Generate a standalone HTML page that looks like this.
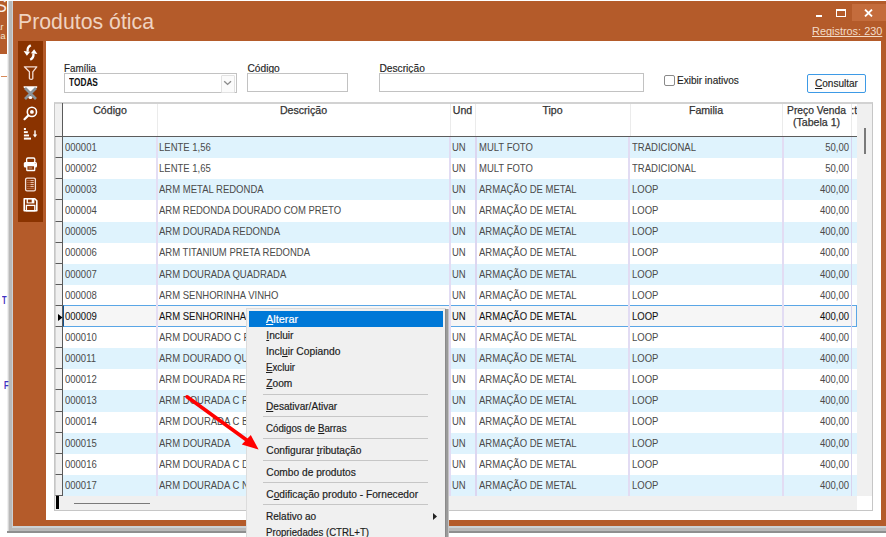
<!DOCTYPE html><html><head><meta charset="utf-8"><style>
*{margin:0;padding:0;box-sizing:border-box}
html,body{width:886px;height:537px;overflow:hidden;background:#fff;font-family:"Liberation Sans",sans-serif}
.a{position:absolute}
.t{position:absolute;white-space:nowrap;line-height:1}
u{text-decoration:underline;text-underline-offset:1px;text-decoration-skip-ink:none}
</style></head><body><div class="a" style="left:0px;top:1px;width:7px;height:53px;background:#b55c2b;"></div>
<div class="t" style="left:-4.8px;top:-1.59px;font-size:17.5px;color:#f8ede6;">S</div>
<div class="t" style="left:-4.5px;top:22.89px;font-size:9px;color:#f2e6d2;">ar</div>
<div class="t" style="left:-4.5px;top:31.89px;font-size:9px;color:#f2e6d2;">na</div>
<div class="a" style="left:1px;top:76px;width:6px;height:1px;background:#d88a5a;"></div>
<div class="a" style="left:6.5px;top:54px;width:1.5px;height:478px;background:#f0f0f0;"></div>
<div class="a" style="left:8px;top:1px;width:880px;height:531px;background:#b9b9b9;"></div>
<div class="a" style="left:8px;top:1px;width:1px;height:531px;background:#d6d6d6;"></div>
<div class="a" style="left:12px;top:1px;width:1px;height:526px;background:#ccd0d4;"></div>
<div class="a" style="left:12px;top:526px;width:880px;height:2px;background:#cdd1d4;"></div>
<div class="a" style="left:7px;top:531px;width:879px;height:2px;background:#8f8f8f;"></div>
<div class="t" style="left:2.2px;top:296.05px;font-size:10px;color:#4030c0;transform:scaleX(0.75);transform-origin:left top;font-weight:bold">T</div>
<div class="t" style="left:3.6px;top:381.05px;font-size:10px;color:#4030c0;transform:scaleX(0.75);transform-origin:left top;font-weight:bold">F</div>
<div class="a" style="left:13px;top:1px;width:880px;height:525px;background:#b45b2a;"></div>
<div class="t" style="left:17.9px;top:11.37px;font-size:22.4px;color:#efd3c1;transform:scaleX(0.95);transform-origin:left top;">Produtos ótica</div>
<div class="a" style="left:852px;top:4px;width:40px;height:17px;background:#c46c3c;"></div>
<div class="a" style="left:816px;top:15px;width:6px;height:2px;background:#fff;"></div>
<div class="a" style="left:836px;top:9px;width:10px;height:8px;border:1.5px solid #fff;border-top-width:2.5px"></div>
<svg class="a" style="left:864px;top:9px" width="9" height="8" viewBox="0 0 9 8"><path d="M1 0.6L8 7.4M8 0.6L1 7.4" stroke="#fff" stroke-width="1.9"/></svg>
<div class="t" style="left:811.5px;top:25.84px;font-size:11.2px;color:#f3dcc8;transform:scaleX(0.975);transform-origin:left top;text-decoration:underline;text-underline-offset:1.2px;text-decoration-skip-ink:none">Registros: 230</div>
<div class="a" style="left:18px;top:41px;width:25px;height:181px;background:#8a3300;"></div>
<div class="a" style="left:46px;top:41px;width:835px;height:479px;background:#fff;"></div>
<div class="t" style="left:64.3px;top:63.78px;font-size:10.2px;color:#1e1e1e;transform:scaleX(0.96);transform-origin:left top;-webkit-text-stroke:0.15px #1e1e1e">Família</div>
<div class="a" style="left:64px;top:73px;width:173px;height:20px;border:1px solid #c2c2c2;background:#fff"></div>
<div class="t" style="left:69.2px;top:78.18px;font-size:10.2px;color:#111;transform:scaleX(0.815);transform-origin:left top;font-weight:bold">TODAS</div>
<div class="a" style="left:221px;top:74.5px;width:14px;height:18px;border:1px solid #e2e2e2;border-radius:1px;background:#fbfbfb"></div>
<svg class="a" style="left:223px;top:80px" width="10" height="6" viewBox="0 0 10 6"><path d="M1.2 1.2L4.6 4.4L8 1.2" stroke="#8c8c8c" fill="none" stroke-width="1.4"/></svg>
<div class="a" style="left:247px;top:60px;width:60px;height:13px;overflow:hidden">
<div class="t" style="left:0.5px;top:3.68px;font-size:10.2px;color:#1e1e1e;-webkit-text-stroke:0.15px #1e1e1e">Código</div>
</div>
<div class="a" style="left:247px;top:73px;width:101px;height:19px;border:1px solid #c2c2c2;background:#fff"></div>
<div class="t" style="left:379.5px;top:63.88px;font-size:10.2px;color:#1e1e1e;-webkit-text-stroke:0.15px #1e1e1e">Descrição</div>
<div class="a" style="left:379px;top:73px;width:265px;height:19px;border:1px solid #c2c2c2;background:#fff"></div>
<div class="a" style="left:664px;top:75px;width:11px;height:11px;border:1px solid #8a8a8a;border-radius:2px;background:#fff"></div>
<div class="t" style="left:677.2px;top:75.91px;font-size:10.4px;color:#1e1e1e;transform:scaleX(0.965);transform-origin:left top;-webkit-text-stroke:0.15px #1e1e1e">Exibir inativos</div>
<div class="a" style="left:807px;top:74px;width:59px;height:19px;border:1px solid #3d9ae6;border-radius:2px;background:#fdfdfd"></div>
<div class="t" style="left:814.5px;top:78.61px;font-size:10.4px;color:#1e1e1e;transform:scaleX(0.965);transform-origin:left top;-webkit-text-stroke:0.15px #1e1e1e"><u>C</u>onsultar</div>
<div class="a" style="left:54px;top:102px;width:819px;height:409px;border:1px solid #c6c6c6;border-top:2px solid #d2d2d2;background:#fff"></div>
<div class="t" style="left:63px;top:104.64px;font-size:10.6px;color:#333;width:94px;text-align:center;-webkit-text-stroke:0.25px #333">Código</div>
<div class="t" style="left:157px;top:104.64px;font-size:10.6px;color:#333;width:293px;text-align:center;-webkit-text-stroke:0.25px #333">Descrição</div>
<div class="t" style="left:450px;top:104.64px;font-size:10.6px;color:#333;width:25px;text-align:center;-webkit-text-stroke:0.25px #333">Und</div>
<div class="t" style="left:475px;top:104.64px;font-size:10.6px;color:#333;width:155px;text-align:center;-webkit-text-stroke:0.25px #333">Tipo</div>
<div class="t" style="left:630px;top:104.64px;font-size:10.6px;color:#333;width:152px;text-align:center;-webkit-text-stroke:0.25px #333">Familia</div>
<div class="t" style="left:782px;top:104.54px;font-size:10.6px;color:#333;width:69px;text-align:center;transform:scaleX(0.97);transform-origin:center top;-webkit-text-stroke:0.25px #333">Preço Venda</div>
<div class="t" style="left:782px;top:116.54px;font-size:10.6px;color:#333;width:69px;text-align:center;-webkit-text-stroke:0.25px #333">(Tabela 1)</div>
<div class="a" style="left:851px;top:103px;width:6px;height:20px;overflow:hidden">
<div class="t" style="left:0.2px;top:1.54px;font-size:10.6px;color:#333;-webkit-text-stroke:0.25px #333">:t</div>
</div>
<div class="a" style="left:157px;top:104px;width:1px;height:32px;background:#ebebeb;"></div>
<div class="a" style="left:450px;top:104px;width:1px;height:32px;background:#ebebeb;"></div>
<div class="a" style="left:475px;top:104px;width:1px;height:32px;background:#ebebeb;"></div>
<div class="a" style="left:630px;top:104px;width:1px;height:32px;background:#ebebeb;"></div>
<div class="a" style="left:782px;top:104px;width:1px;height:32px;background:#ebebeb;"></div>
<div class="a" style="left:851px;top:104px;width:1px;height:32px;background:#ebebeb;"></div>
<div class="a" style="left:55px;top:104px;width:7px;height:32px;background:#f0f0f0;"></div>
<div class="a" style="left:62px;top:103px;width:1.2px;height:393px;background:#5a5a5a;"></div>
<div class="a" style="left:55px;top:136px;width:802px;height:1px;background:#5c5c5c;"></div>
<div class="a" style="left:63px;top:137px;width:794px;height:21px;background:#dff3fd;"></div>
<div class="a" style="left:55px;top:137px;width:7px;height:21px;background:#f0f0f0;border-left:1px solid #d4d4d4;border-bottom:1px solid #5c5c5c"></div>
<div class="t" style="left:65.2px;top:142.81px;font-size:10.4px;color:#4a4a4a;transform:scaleX(0.915);transform-origin:left top;">000001</div>
<div class="t" style="left:159.3px;top:142.81px;font-size:10.4px;color:#4a4a4a;transform:scaleX(0.915);transform-origin:left top;">LENTE 1,56</div>
<div class="t" style="left:452.3px;top:142.81px;font-size:10.4px;color:#4a4a4a;transform:scaleX(0.915);transform-origin:left top;">UN</div>
<div class="t" style="left:478.6px;top:142.81px;font-size:10.4px;color:#4a4a4a;transform:scaleX(0.915);transform-origin:left top;">MULT FOTO</div>
<div class="t" style="left:632px;top:142.81px;font-size:10.4px;color:#4a4a4a;transform:scaleX(0.915);transform-origin:left top;">TRADICIONAL</div>
<div class="t" style="left:782px;top:142.81px;font-size:10.4px;color:#4a4a4a;width:67px;text-align:right;transform:scaleX(0.915);transform-origin:right top;">50,00</div>
<div class="a" style="left:63px;top:158px;width:794px;height:21px;background:#ffffff;"></div>
<div class="a" style="left:55px;top:158px;width:7px;height:21px;background:#f0f0f0;border-left:1px solid #d4d4d4;border-bottom:1px solid #5c5c5c"></div>
<div class="t" style="left:65.2px;top:163.94px;font-size:10.4px;color:#4a4a4a;transform:scaleX(0.915);transform-origin:left top;">000002</div>
<div class="t" style="left:159.3px;top:163.94px;font-size:10.4px;color:#4a4a4a;transform:scaleX(0.915);transform-origin:left top;">LENTE 1,65</div>
<div class="t" style="left:452.3px;top:163.94px;font-size:10.4px;color:#4a4a4a;transform:scaleX(0.915);transform-origin:left top;">UN</div>
<div class="t" style="left:478.6px;top:163.94px;font-size:10.4px;color:#4a4a4a;transform:scaleX(0.915);transform-origin:left top;">MULT FOTO</div>
<div class="t" style="left:632px;top:163.94px;font-size:10.4px;color:#4a4a4a;transform:scaleX(0.915);transform-origin:left top;">TRADICIONAL</div>
<div class="t" style="left:782px;top:163.94px;font-size:10.4px;color:#4a4a4a;width:67px;text-align:right;transform:scaleX(0.915);transform-origin:right top;">50,00</div>
<div class="a" style="left:63px;top:179px;width:794px;height:21px;background:#dff3fd;"></div>
<div class="a" style="left:55px;top:179px;width:7px;height:21px;background:#f0f0f0;border-left:1px solid #d4d4d4;border-bottom:1px solid #5c5c5c"></div>
<div class="t" style="left:65.2px;top:185.06px;font-size:10.4px;color:#4a4a4a;transform:scaleX(0.915);transform-origin:left top;">000003</div>
<div class="t" style="left:159.3px;top:185.06px;font-size:10.4px;color:#4a4a4a;transform:scaleX(0.915);transform-origin:left top;">ARM METAL REDONDA</div>
<div class="t" style="left:452.3px;top:185.06px;font-size:10.4px;color:#4a4a4a;transform:scaleX(0.915);transform-origin:left top;">UN</div>
<div class="t" style="left:478.6px;top:185.06px;font-size:10.4px;color:#4a4a4a;transform:scaleX(0.915);transform-origin:left top;">ARMAÇÃO DE METAL</div>
<div class="t" style="left:632px;top:185.06px;font-size:10.4px;color:#4a4a4a;transform:scaleX(0.915);transform-origin:left top;">LOOP</div>
<div class="t" style="left:782px;top:185.06px;font-size:10.4px;color:#4a4a4a;width:67px;text-align:right;transform:scaleX(0.915);transform-origin:right top;">400,00</div>
<div class="a" style="left:63px;top:200px;width:794px;height:22px;background:#ffffff;"></div>
<div class="a" style="left:55px;top:200px;width:7px;height:22px;background:#f0f0f0;border-left:1px solid #d4d4d4;border-bottom:1px solid #5c5c5c"></div>
<div class="t" style="left:65.2px;top:206.19px;font-size:10.4px;color:#4a4a4a;transform:scaleX(0.915);transform-origin:left top;">000004</div>
<div class="t" style="left:159.3px;top:206.19px;font-size:10.4px;color:#4a4a4a;transform:scaleX(0.915);transform-origin:left top;">ARM REDONDA DOURADO COM PRETO</div>
<div class="t" style="left:452.3px;top:206.19px;font-size:10.4px;color:#4a4a4a;transform:scaleX(0.915);transform-origin:left top;">UN</div>
<div class="t" style="left:478.6px;top:206.19px;font-size:10.4px;color:#4a4a4a;transform:scaleX(0.915);transform-origin:left top;">ARMAÇÃO DE METAL</div>
<div class="t" style="left:632px;top:206.19px;font-size:10.4px;color:#4a4a4a;transform:scaleX(0.915);transform-origin:left top;">LOOP</div>
<div class="t" style="left:782px;top:206.19px;font-size:10.4px;color:#4a4a4a;width:67px;text-align:right;transform:scaleX(0.915);transform-origin:right top;">400,00</div>
<div class="a" style="left:63px;top:222px;width:794px;height:21px;background:#dff3fd;"></div>
<div class="a" style="left:55px;top:222px;width:7px;height:21px;background:#f0f0f0;border-left:1px solid #d4d4d4;border-bottom:1px solid #5c5c5c"></div>
<div class="t" style="left:65.2px;top:227.31px;font-size:10.4px;color:#4a4a4a;transform:scaleX(0.915);transform-origin:left top;">000005</div>
<div class="t" style="left:159.3px;top:227.31px;font-size:10.4px;color:#4a4a4a;transform:scaleX(0.915);transform-origin:left top;">ARM DOURADA REDONDA</div>
<div class="t" style="left:452.3px;top:227.31px;font-size:10.4px;color:#4a4a4a;transform:scaleX(0.915);transform-origin:left top;">UN</div>
<div class="t" style="left:478.6px;top:227.31px;font-size:10.4px;color:#4a4a4a;transform:scaleX(0.915);transform-origin:left top;">ARMAÇÃO DE METAL</div>
<div class="t" style="left:632px;top:227.31px;font-size:10.4px;color:#4a4a4a;transform:scaleX(0.915);transform-origin:left top;">LOOP</div>
<div class="t" style="left:782px;top:227.31px;font-size:10.4px;color:#4a4a4a;width:67px;text-align:right;transform:scaleX(0.915);transform-origin:right top;">400,00</div>
<div class="a" style="left:63px;top:243px;width:794px;height:21px;background:#ffffff;"></div>
<div class="a" style="left:55px;top:243px;width:7px;height:21px;background:#f0f0f0;border-left:1px solid #d4d4d4;border-bottom:1px solid #5c5c5c"></div>
<div class="t" style="left:65.2px;top:248.44px;font-size:10.4px;color:#4a4a4a;transform:scaleX(0.915);transform-origin:left top;">000006</div>
<div class="t" style="left:159.3px;top:248.44px;font-size:10.4px;color:#4a4a4a;transform:scaleX(0.915);transform-origin:left top;">ARM TITANIUM PRETA REDONDA</div>
<div class="t" style="left:452.3px;top:248.44px;font-size:10.4px;color:#4a4a4a;transform:scaleX(0.915);transform-origin:left top;">UN</div>
<div class="t" style="left:478.6px;top:248.44px;font-size:10.4px;color:#4a4a4a;transform:scaleX(0.915);transform-origin:left top;">ARMAÇÃO DE METAL</div>
<div class="t" style="left:632px;top:248.44px;font-size:10.4px;color:#4a4a4a;transform:scaleX(0.915);transform-origin:left top;">LOOP</div>
<div class="t" style="left:782px;top:248.44px;font-size:10.4px;color:#4a4a4a;width:67px;text-align:right;transform:scaleX(0.915);transform-origin:right top;">400,00</div>
<div class="a" style="left:63px;top:264px;width:794px;height:21px;background:#dff3fd;"></div>
<div class="a" style="left:55px;top:264px;width:7px;height:21px;background:#f0f0f0;border-left:1px solid #d4d4d4;border-bottom:1px solid #5c5c5c"></div>
<div class="t" style="left:65.2px;top:269.56px;font-size:10.4px;color:#4a4a4a;transform:scaleX(0.915);transform-origin:left top;">000007</div>
<div class="t" style="left:159.3px;top:269.56px;font-size:10.4px;color:#4a4a4a;transform:scaleX(0.915);transform-origin:left top;">ARM DOURADA QUADRADA</div>
<div class="t" style="left:452.3px;top:269.56px;font-size:10.4px;color:#4a4a4a;transform:scaleX(0.915);transform-origin:left top;">UN</div>
<div class="t" style="left:478.6px;top:269.56px;font-size:10.4px;color:#4a4a4a;transform:scaleX(0.915);transform-origin:left top;">ARMAÇÃO DE METAL</div>
<div class="t" style="left:632px;top:269.56px;font-size:10.4px;color:#4a4a4a;transform:scaleX(0.915);transform-origin:left top;">LOOP</div>
<div class="t" style="left:782px;top:269.56px;font-size:10.4px;color:#4a4a4a;width:67px;text-align:right;transform:scaleX(0.915);transform-origin:right top;">400,00</div>
<div class="a" style="left:63px;top:285px;width:794px;height:21px;background:#ffffff;"></div>
<div class="a" style="left:55px;top:285px;width:7px;height:21px;background:#f0f0f0;border-left:1px solid #d4d4d4;border-bottom:1px solid #5c5c5c"></div>
<div class="t" style="left:65.2px;top:290.69px;font-size:10.4px;color:#4a4a4a;transform:scaleX(0.915);transform-origin:left top;">000008</div>
<div class="t" style="left:159.3px;top:290.69px;font-size:10.4px;color:#4a4a4a;transform:scaleX(0.915);transform-origin:left top;">ARM SENHORINHA VINHO</div>
<div class="t" style="left:452.3px;top:290.69px;font-size:10.4px;color:#4a4a4a;transform:scaleX(0.915);transform-origin:left top;">UN</div>
<div class="t" style="left:478.6px;top:290.69px;font-size:10.4px;color:#4a4a4a;transform:scaleX(0.915);transform-origin:left top;">ARMAÇÃO DE METAL</div>
<div class="t" style="left:632px;top:290.69px;font-size:10.4px;color:#4a4a4a;transform:scaleX(0.915);transform-origin:left top;">LOOP</div>
<div class="t" style="left:782px;top:290.69px;font-size:10.4px;color:#4a4a4a;width:67px;text-align:right;transform:scaleX(0.915);transform-origin:right top;">400,00</div>
<div class="a" style="left:63px;top:306px;width:794px;height:21px;background:#f6f6f6;"></div>
<div class="a" style="left:55px;top:306px;width:7px;height:21px;background:#f0f0f0;border-left:1px solid #d4d4d4;border-bottom:1px solid #5c5c5c"></div>
<div class="t" style="left:65.2px;top:311.81px;font-size:10.4px;color:#1a1a1a;transform:scaleX(0.915);transform-origin:left top;;-webkit-text-stroke:0.08px #000">000009</div>
<div class="t" style="left:159.3px;top:311.81px;font-size:10.4px;color:#1a1a1a;transform:scaleX(0.915);transform-origin:left top;;-webkit-text-stroke:0.08px #000">ARM SENHORINHA VINHO</div>
<div class="t" style="left:452.3px;top:311.81px;font-size:10.4px;color:#1a1a1a;transform:scaleX(0.915);transform-origin:left top;;-webkit-text-stroke:0.08px #000">UN</div>
<div class="t" style="left:478.6px;top:311.81px;font-size:10.4px;color:#1a1a1a;transform:scaleX(0.915);transform-origin:left top;;-webkit-text-stroke:0.08px #000">ARMAÇÃO DE METAL</div>
<div class="t" style="left:632px;top:311.81px;font-size:10.4px;color:#1a1a1a;transform:scaleX(0.915);transform-origin:left top;;-webkit-text-stroke:0.08px #000">LOOP</div>
<div class="t" style="left:782px;top:311.81px;font-size:10.4px;color:#1a1a1a;width:67px;text-align:right;transform:scaleX(0.915);transform-origin:right top;;-webkit-text-stroke:0.08px #000">400,00</div>
<div class="a" style="left:63px;top:305px;width:794px;height:22px;border:1px solid #5aa6e6;border-left:1.5px solid #14508c"></div>
<svg class="a" style="left:58px;top:314px" width="5" height="7" viewBox="0 0 5 7"><path d="M0 0L4.5 3.5L0 7Z" fill="#000"/></svg>
<div class="a" style="left:63px;top:327px;width:794px;height:21px;background:#ffffff;"></div>
<div class="a" style="left:55px;top:327px;width:7px;height:21px;background:#f0f0f0;border-left:1px solid #d4d4d4;border-bottom:1px solid #5c5c5c"></div>
<div class="t" style="left:65.2px;top:332.94px;font-size:10.4px;color:#4a4a4a;transform:scaleX(0.915);transform-origin:left top;">000010</div>
<div class="t" style="left:159.3px;top:332.94px;font-size:10.4px;color:#4a4a4a;transform:scaleX(0.915);transform-origin:left top;">ARM DOURADO C PRETO</div>
<div class="t" style="left:452.3px;top:332.94px;font-size:10.4px;color:#4a4a4a;transform:scaleX(0.915);transform-origin:left top;">UN</div>
<div class="t" style="left:478.6px;top:332.94px;font-size:10.4px;color:#4a4a4a;transform:scaleX(0.915);transform-origin:left top;">ARMAÇÃO DE METAL</div>
<div class="t" style="left:632px;top:332.94px;font-size:10.4px;color:#4a4a4a;transform:scaleX(0.915);transform-origin:left top;">LOOP</div>
<div class="t" style="left:782px;top:332.94px;font-size:10.4px;color:#4a4a4a;width:67px;text-align:right;transform:scaleX(0.915);transform-origin:right top;">400,00</div>
<div class="a" style="left:63px;top:348px;width:794px;height:21px;background:#dff3fd;"></div>
<div class="a" style="left:55px;top:348px;width:7px;height:21px;background:#f0f0f0;border-left:1px solid #d4d4d4;border-bottom:1px solid #5c5c5c"></div>
<div class="t" style="left:65.2px;top:354.06px;font-size:10.4px;color:#4a4a4a;transform:scaleX(0.915);transform-origin:left top;">000011</div>
<div class="t" style="left:159.3px;top:354.06px;font-size:10.4px;color:#4a4a4a;transform:scaleX(0.915);transform-origin:left top;">ARM DOURADO QUADRADO</div>
<div class="t" style="left:452.3px;top:354.06px;font-size:10.4px;color:#4a4a4a;transform:scaleX(0.915);transform-origin:left top;">UN</div>
<div class="t" style="left:478.6px;top:354.06px;font-size:10.4px;color:#4a4a4a;transform:scaleX(0.915);transform-origin:left top;">ARMAÇÃO DE METAL</div>
<div class="t" style="left:632px;top:354.06px;font-size:10.4px;color:#4a4a4a;transform:scaleX(0.915);transform-origin:left top;">LOOP</div>
<div class="t" style="left:782px;top:354.06px;font-size:10.4px;color:#4a4a4a;width:67px;text-align:right;transform:scaleX(0.915);transform-origin:right top;">400,00</div>
<div class="a" style="left:63px;top:369px;width:794px;height:21px;background:#ffffff;"></div>
<div class="a" style="left:55px;top:369px;width:7px;height:21px;background:#f0f0f0;border-left:1px solid #d4d4d4;border-bottom:1px solid #5c5c5c"></div>
<div class="t" style="left:65.2px;top:375.19px;font-size:10.4px;color:#4a4a4a;transform:scaleX(0.915);transform-origin:left top;">000012</div>
<div class="t" style="left:159.3px;top:375.19px;font-size:10.4px;color:#4a4a4a;transform:scaleX(0.915);transform-origin:left top;">ARM DOURADA REDONDA</div>
<div class="t" style="left:452.3px;top:375.19px;font-size:10.4px;color:#4a4a4a;transform:scaleX(0.915);transform-origin:left top;">UN</div>
<div class="t" style="left:478.6px;top:375.19px;font-size:10.4px;color:#4a4a4a;transform:scaleX(0.915);transform-origin:left top;">ARMAÇÃO DE METAL</div>
<div class="t" style="left:632px;top:375.19px;font-size:10.4px;color:#4a4a4a;transform:scaleX(0.915);transform-origin:left top;">LOOP</div>
<div class="t" style="left:782px;top:375.19px;font-size:10.4px;color:#4a4a4a;width:67px;text-align:right;transform:scaleX(0.915);transform-origin:right top;">400,00</div>
<div class="a" style="left:63px;top:390px;width:794px;height:22px;background:#dff3fd;"></div>
<div class="a" style="left:55px;top:390px;width:7px;height:22px;background:#f0f0f0;border-left:1px solid #d4d4d4;border-bottom:1px solid #5c5c5c"></div>
<div class="t" style="left:65.2px;top:396.31px;font-size:10.4px;color:#4a4a4a;transform:scaleX(0.915);transform-origin:left top;">000013</div>
<div class="t" style="left:159.3px;top:396.31px;font-size:10.4px;color:#4a4a4a;transform:scaleX(0.915);transform-origin:left top;">ARM DOURADA C PRETO</div>
<div class="t" style="left:452.3px;top:396.31px;font-size:10.4px;color:#4a4a4a;transform:scaleX(0.915);transform-origin:left top;">UN</div>
<div class="t" style="left:478.6px;top:396.31px;font-size:10.4px;color:#4a4a4a;transform:scaleX(0.915);transform-origin:left top;">ARMAÇÃO DE METAL</div>
<div class="t" style="left:632px;top:396.31px;font-size:10.4px;color:#4a4a4a;transform:scaleX(0.915);transform-origin:left top;">LOOP</div>
<div class="t" style="left:782px;top:396.31px;font-size:10.4px;color:#4a4a4a;width:67px;text-align:right;transform:scaleX(0.915);transform-origin:right top;">400,00</div>
<div class="a" style="left:63px;top:412px;width:794px;height:21px;background:#ffffff;"></div>
<div class="a" style="left:55px;top:412px;width:7px;height:21px;background:#f0f0f0;border-left:1px solid #d4d4d4;border-bottom:1px solid #5c5c5c"></div>
<div class="t" style="left:65.2px;top:417.44px;font-size:10.4px;color:#4a4a4a;transform:scaleX(0.915);transform-origin:left top;">000014</div>
<div class="t" style="left:159.3px;top:417.44px;font-size:10.4px;color:#4a4a4a;transform:scaleX(0.915);transform-origin:left top;">ARM DOURADA C BRANCO</div>
<div class="t" style="left:452.3px;top:417.44px;font-size:10.4px;color:#4a4a4a;transform:scaleX(0.915);transform-origin:left top;">UN</div>
<div class="t" style="left:478.6px;top:417.44px;font-size:10.4px;color:#4a4a4a;transform:scaleX(0.915);transform-origin:left top;">ARMAÇÃO DE METAL</div>
<div class="t" style="left:632px;top:417.44px;font-size:10.4px;color:#4a4a4a;transform:scaleX(0.915);transform-origin:left top;">LOOP</div>
<div class="t" style="left:782px;top:417.44px;font-size:10.4px;color:#4a4a4a;width:67px;text-align:right;transform:scaleX(0.915);transform-origin:right top;">400,00</div>
<div class="a" style="left:63px;top:433px;width:794px;height:21px;background:#dff3fd;"></div>
<div class="a" style="left:55px;top:433px;width:7px;height:21px;background:#f0f0f0;border-left:1px solid #d4d4d4;border-bottom:1px solid #5c5c5c"></div>
<div class="t" style="left:65.2px;top:438.56px;font-size:10.4px;color:#4a4a4a;transform:scaleX(0.915);transform-origin:left top;">000015</div>
<div class="t" style="left:159.3px;top:438.56px;font-size:10.4px;color:#4a4a4a;transform:scaleX(0.915);transform-origin:left top;">ARM DOURADA</div>
<div class="t" style="left:452.3px;top:438.56px;font-size:10.4px;color:#4a4a4a;transform:scaleX(0.915);transform-origin:left top;">UN</div>
<div class="t" style="left:478.6px;top:438.56px;font-size:10.4px;color:#4a4a4a;transform:scaleX(0.915);transform-origin:left top;">ARMAÇÃO DE METAL</div>
<div class="t" style="left:632px;top:438.56px;font-size:10.4px;color:#4a4a4a;transform:scaleX(0.915);transform-origin:left top;">LOOP</div>
<div class="t" style="left:782px;top:438.56px;font-size:10.4px;color:#4a4a4a;width:67px;text-align:right;transform:scaleX(0.915);transform-origin:right top;">400,00</div>
<div class="a" style="left:63px;top:454px;width:794px;height:21px;background:#ffffff;"></div>
<div class="a" style="left:55px;top:454px;width:7px;height:21px;background:#f0f0f0;border-left:1px solid #d4d4d4;border-bottom:1px solid #5c5c5c"></div>
<div class="t" style="left:65.2px;top:459.69px;font-size:10.4px;color:#4a4a4a;transform:scaleX(0.915);transform-origin:left top;">000016</div>
<div class="t" style="left:159.3px;top:459.69px;font-size:10.4px;color:#4a4a4a;transform:scaleX(0.915);transform-origin:left top;">ARM DOURADA C DEGRADE</div>
<div class="t" style="left:452.3px;top:459.69px;font-size:10.4px;color:#4a4a4a;transform:scaleX(0.915);transform-origin:left top;">UN</div>
<div class="t" style="left:478.6px;top:459.69px;font-size:10.4px;color:#4a4a4a;transform:scaleX(0.915);transform-origin:left top;">ARMAÇÃO DE METAL</div>
<div class="t" style="left:632px;top:459.69px;font-size:10.4px;color:#4a4a4a;transform:scaleX(0.915);transform-origin:left top;">LOOP</div>
<div class="t" style="left:782px;top:459.69px;font-size:10.4px;color:#4a4a4a;width:67px;text-align:right;transform:scaleX(0.915);transform-origin:right top;">400,00</div>
<div class="a" style="left:63px;top:475px;width:794px;height:21px;background:#dff3fd;"></div>
<div class="a" style="left:55px;top:475px;width:7px;height:21px;background:#f0f0f0;border-left:1px solid #d4d4d4;border-bottom:1px solid #5c5c5c"></div>
<div class="t" style="left:65.2px;top:480.81px;font-size:10.4px;color:#4a4a4a;transform:scaleX(0.915);transform-origin:left top;">000017</div>
<div class="t" style="left:159.3px;top:480.81px;font-size:10.4px;color:#4a4a4a;transform:scaleX(0.915);transform-origin:left top;">ARM DOURADA C NUDE</div>
<div class="t" style="left:452.3px;top:480.81px;font-size:10.4px;color:#4a4a4a;transform:scaleX(0.915);transform-origin:left top;">UN</div>
<div class="t" style="left:478.6px;top:480.81px;font-size:10.4px;color:#4a4a4a;transform:scaleX(0.915);transform-origin:left top;">ARMAÇÃO DE METAL</div>
<div class="t" style="left:632px;top:480.81px;font-size:10.4px;color:#4a4a4a;transform:scaleX(0.915);transform-origin:left top;">LOOP</div>
<div class="t" style="left:782px;top:480.81px;font-size:10.4px;color:#4a4a4a;width:67px;text-align:right;transform:scaleX(0.915);transform-origin:right top;">400,00</div>
<div class="a" style="left:156px;top:137px;width:2px;height:359px;background:#e4def4;"></div>
<div class="a" style="left:449px;top:137px;width:2px;height:359px;background:#e2dcf3;"></div>
<div class="a" style="left:475px;top:137px;width:1.5px;height:359px;background:#dcd6f0;"></div>
<div class="a" style="left:628px;top:137px;width:2px;height:359px;background:#e2dcf3;"></div>
<div class="a" style="left:782px;top:137px;width:2px;height:359px;background:#e2dcf3;"></div>
<div class="a" style="left:851px;top:137px;width:1px;height:359px;background:#d9d3ef;"></div>
<div class="a" style="left:857px;top:104px;width:15px;height:392px;background:#f0f0f0;"></div>
<div class="a" style="left:864px;top:128px;width:1.6px;height:26px;background:#7a7a7a;"></div>
<div class="a" style="left:55px;top:496px;width:817px;height:14px;background:#f0f0f0;"></div>
<div class="a" style="left:74px;top:502.5px;width:76px;height:1.6px;background:#7a7a7a;"></div>
<div class="a" style="left:55.8px;top:496px;width:3px;height:13px;background:#000;"></div>
<div class="a" style="left:857px;top:496px;width:15px;height:14px;background:#fff;"></div>

<svg class="a" style="left:0;top:0" width="50" height="230" viewBox="0 0 50 230">
<g fill="#fff" stroke="none">
<path d="M30.8 45.3 C28.3 46.6 27.2 48.8 27.6 51.6" fill="none" stroke="#fff" stroke-width="2.3"/>
<path d="M23.6 51.1 L30.1 51.7 L26.9 55.8 Z"/>
<path d="M30.2 59.7 C32.7 58.4 33.8 56.2 33.4 53.4" fill="none" stroke="#fff" stroke-width="2.3"/>
<path d="M37.4 53.9 L30.9 53.3 L34.1 49.2 Z"/>
</g>
<path d="M24.4 66.8 L36.8 66.8 L32.8 71.8 L32.8 78.6 Q32.8 79.4 31.2 79.4 Q29.4 79.4 29.4 78.6 L29.4 71.8 Z" fill="none" stroke="#f4dcd2" stroke-width="1.3" stroke-linejoin="round"/>
<path d="M23.6 86.2 L37.2 86.2 L37.2 87.6 L30.5 92 L23.6 87.6 Z" fill="#fff"/>
<path d="M25 88 L36 99 M36 88 L25 99" stroke="#8a9399" stroke-width="2.7"/>
<ellipse cx="30.4" cy="97.6" rx="1.9" ry="1.5" fill="#fff"/>
<g fill="none" stroke="#fff">
<circle cx="31.9" cy="111.9" r="4.6" stroke-width="1.6"/>
<path d="M28.4 115.4 L24.5 119.2" stroke-width="2.2" stroke-linecap="round"/>
</g>
<circle cx="31.9" cy="111.9" r="1.9" fill="#fff"/>
<g fill="#fff">
<rect x="23.9" y="128" width="2" height="2"/>
<rect x="23.9" y="131.2" width="3.9" height="1.9"/>
<rect x="23.9" y="134.5" width="5.1" height="1.9"/>
<rect x="23.9" y="137.6" width="7.1" height="2"/>
<rect x="34.3" y="130.4" width="1.4" height="4.6"/>
<path d="M32.8 134.4 L37.2 134.4 L35 137.6 Z"/>
</g>
<rect x="26.6" y="158" width="8.2" height="4.6" rx="1.3" fill="none" stroke="#fff" stroke-width="1.3"/>
<rect x="23.8" y="162" width="13.2" height="5.4" rx="1.5" fill="#fff"/>
<rect x="26.8" y="165.5" width="7.9" height="5" rx="0.6" fill="#8a3300" stroke="#fff" stroke-width="1.3"/>
<rect x="28.6" y="167.2" width="3.6" height="1.6" fill="#b87a5a"/>
<circle cx="35.2" cy="163.4" r="0.5" fill="#d09070"/>
<rect x="25.6" y="178.2" width="9.8" height="12.6" rx="1.4" fill="none" stroke="#f6e4dc" stroke-width="1.3"/>
<path d="M26.8 180.6 h7.4 M26.8 182.6 h7.4 M26.8 184.6 h7.4 M26.8 186.6 h7.4 M26.8 188.6 h7.4" stroke="#c07858" stroke-width="0.8"/>
<path d="M30.6 180.6 h3 M30.6 182.6 h3 M30.6 184.6 h3 M30.6 186.6 h3" stroke="#ecc8b4" stroke-width="1"/>
<path d="M24.2 198.7 L34.8 198.7 L36.8 200.7 L36.8 210.8 L24.2 210.8 Z" fill="none" stroke="#fff" stroke-width="1.6" stroke-linejoin="round"/>
<rect x="26.6" y="198.6" width="7.8" height="4.8" fill="#fff"/>
<rect x="27.9" y="199.6" width="3.8" height="2.8" fill="#8a3300"/>
<rect x="26.4" y="205.4" width="8.4" height="5.4" fill="none" stroke="#fff" stroke-width="1.3"/>
</svg>

<div class="a" style="left:246px;top:308px;width:200px;height:240px;background:#f0f0f0;border:1px solid #dcdcdc"></div>
<div class="a" style="left:445px;top:309px;width:1px;height:240px;background:#8a8a8a;"></div>
<div class="a" style="left:446px;top:309px;width:1.5px;height:240px;background:#9a9a9a;"></div>
<div class="a" style="left:447.5px;top:309px;width:1px;height:240px;background:#c4c4c4;"></div>
<div class="a" style="left:249px;top:311px;width:194px;height:16px;background:#0078d7;"></div>
<div class="t" style="left:266.3px;top:315.28px;font-size:10.2px;color:#fff;transform:scaleX(1.07);transform-origin:left top;letter-spacing:0px;-webkit-text-stroke:0.18px #fff"><u>A</u>lterar</div>
<div class="t" style="left:266.3px;top:331.28px;font-size:10.2px;color:#1c1c1c;letter-spacing:0px;-webkit-text-stroke:0.18px #1c1c1c"><u>I</u>ncluir</div>
<div class="t" style="left:266.3px;top:347.28px;font-size:10.2px;color:#1c1c1c;transform:scaleX(1.01);transform-origin:left top;letter-spacing:0px;-webkit-text-stroke:0.18px #1c1c1c">Incl<u>u</u>ir Copiando</div>
<div class="t" style="left:266.3px;top:363.28px;font-size:10.2px;color:#1c1c1c;transform:scaleX(0.95);transform-origin:left top;letter-spacing:0px;-webkit-text-stroke:0.18px #1c1c1c"><u>E</u>xcluir</div>
<div class="t" style="left:266.3px;top:379.28px;font-size:10.2px;color:#1c1c1c;letter-spacing:0px;-webkit-text-stroke:0.18px #1c1c1c"><u>Z</u>oom</div>
<div class="t" style="left:266.3px;top:401.68px;font-size:10.2px;color:#1c1c1c;transform:scaleX(0.99);transform-origin:left top;letter-spacing:0px;-webkit-text-stroke:0.18px #1c1c1c"><u>D</u>esativar/Ativar</div>
<div class="t" style="left:266.3px;top:423.58px;font-size:10.2px;color:#1c1c1c;transform:scaleX(0.955);transform-origin:left top;letter-spacing:0px;-webkit-text-stroke:0.18px #1c1c1c">Códigos de <u>B</u>arras</div>
<div class="t" style="left:266.3px;top:445.58px;font-size:10.2px;color:#1c1c1c;letter-spacing:0px;-webkit-text-stroke:0.18px #1c1c1c">Configurar <u>t</u>ributação</div>
<div class="t" style="left:266.3px;top:467.68px;font-size:10.2px;color:#1c1c1c;letter-spacing:0px;-webkit-text-stroke:0.18px #1c1c1c">Combo de produtos</div>
<div class="t" style="left:266.3px;top:489.78px;font-size:10.2px;color:#1c1c1c;letter-spacing:0px;-webkit-text-stroke:0.18px #1c1c1c">C<u>o</u>dificação produto - Fornecedor</div>
<div class="t" style="left:266.3px;top:511.68px;font-size:10.2px;color:#1c1c1c;transform:scaleX(0.985);transform-origin:left top;letter-spacing:0px;-webkit-text-stroke:0.18px #1c1c1c">Relativo ao</div>
<div class="t" style="left:266.3px;top:527.68px;font-size:10.2px;color:#1c1c1c;transform:scaleX(0.945);transform-origin:left top;letter-spacing:0px;-webkit-text-stroke:0.18px #1c1c1c">Propriedades (CTRL+T)</div>
<div class="a" style="left:263px;top:394px;width:165px;height:1px;background:#c6c6c6;"></div>
<div class="a" style="left:263px;top:416px;width:165px;height:1px;background:#c6c6c6;"></div>
<div class="a" style="left:263px;top:438px;width:165px;height:1px;background:#c6c6c6;"></div>
<div class="a" style="left:263px;top:460px;width:165px;height:1px;background:#c6c6c6;"></div>
<div class="a" style="left:263px;top:482px;width:165px;height:1px;background:#c6c6c6;"></div>
<div class="a" style="left:263px;top:504px;width:165px;height:1px;background:#c6c6c6;"></div>
<svg class="a" style="left:433px;top:512.5px" width="4" height="7" viewBox="0 0 4 7"><path d="M0 0L4 3.5L0 7Z" fill="#222"/></svg>
<svg class="a" style="left:0;top:0" width="886" height="537" viewBox="0 0 886 537"><line x1="187" y1="396.8" x2="248" y2="441" stroke="#f00" stroke-width="3.6" stroke-linecap="round"/><path d="M258.6 449.6L241.8 444.4L250.8 435Z" fill="#f00"/></svg></body></html>
